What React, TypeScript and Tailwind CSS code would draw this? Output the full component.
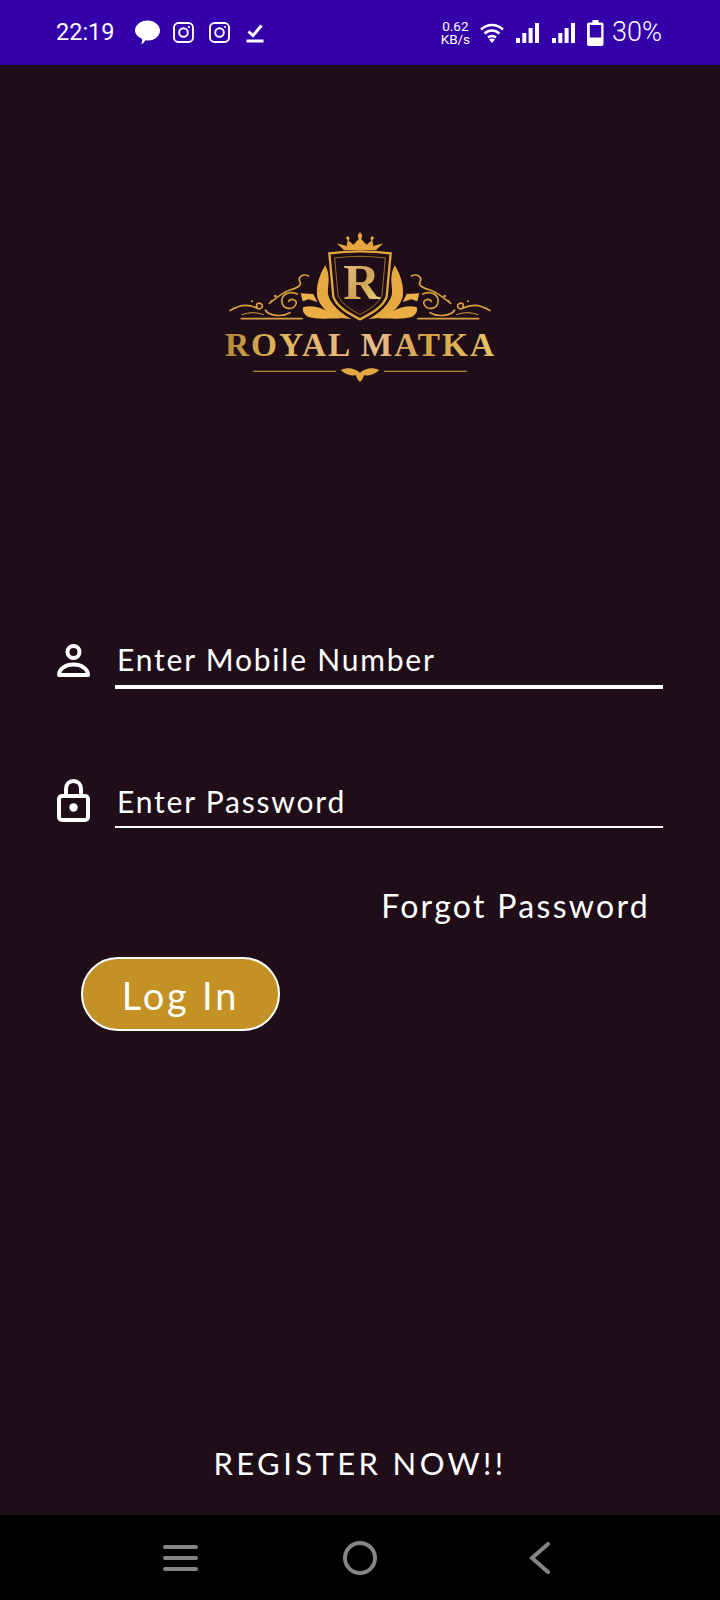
const UI_FONT = { fontFamily: 'Lato, "Noto Sans", sans-serif' }

function StatusIcons() {
  return (
    <div className="flex items-center">
      <svg width="25" height="25" viewBox="0 0 25 25" className="ml-[20px]" fill="#fff">
        <path d="M12.500 0.500C19.400 0.500 25 5 25 10.600c0 5.500-5.200 9.900-11.700 9.900-1.100 0-1.900-.1-2.800-.3-1 1.400-2.700 3.700-4.300 4.100.7-1.600 1.100-3.400.9-5.400C3 17.200 0 14.200 0 10.600 0 5 5.600 0.500 12.500 0.500Z" />
      </svg>
      {[0, 1].map((i) => (
        <svg key={i} width="21" height="21" viewBox="0 0 21 21" className={i === 0 ? 'ml-[13px]' : 'ml-[15px]'} fill="none" stroke="#fff" strokeWidth="1.900">
          <rect x="1" y="1" width="19" height="19" rx="4.500" />
          <circle cx="10.500" cy="10.500" r="4.300" />
          <circle cx="16" cy="5" r="1.100" fill="#fff" stroke="none" />
        </svg>
      ))}
      <svg width="18" height="20" viewBox="0 0 18 20" className="ml-[16px]" fill="none" stroke="#fff" strokeWidth="3">
        <path d="M2.500 8.500 7 12.500 15.500 2.500" />
        <path d="M0.500 18h17" />
      </svg>
    </div>
  )
}

function SignalBars({ className }: { className: string }) {
  return (
    <svg width="23" height="20" viewBox="0 0 23 20" className={className} fill="#fff">
      <rect x="0" y="15" width="4" height="5" />
      <rect x="6.300" y="10" width="4" height="10" />
      <rect x="12.600" y="5" width="4" height="15" />
      <rect x="19" y="0" width="4" height="20" />
    </svg>
  )
}

function NetworkIcons() {
  return (
    <div className="flex items-center">
      <div className="flex flex-col items-center gap-[1px] text-[13.500px] leading-[12px] font-[Roboto]">
        <span>0.62</span>
        <span>KB/s</span>
      </div>
      <svg width="24" height="20" viewBox="0 0 24 20" className="ml-[10px]" fill="none" stroke="#fff" strokeWidth="2.400">
        <path d="M1 6.500C7.500 0.500 16.500 0.500 23 6.500" />
        <path d="M4.500 10.500C9 6.500 15 6.500 19.500 10.500" />
        <path d="M8 14.500C10.500 12.500 13.500 12.500 16 14.500" />
        <path d="M12 20l-3-3.500c2-1.300 4-1.300 6 0Z" fill="#fff" stroke="none" />
      </svg>
      <SignalBars className="ml-[12px]" />
      <SignalBars className="ml-[13px]" />
      <svg width="17" height="26" viewBox="0 0 17 26" className="ml-[12px]" fill="#fff">
        <path d="M5.500 0h6v2.500h3a2 2 0 0 1 2 2V24a2 2 0 0 1-2 2h-12.500a2 2 0 0 1-2-2V4.500a2 2 0 0 1 2-2h3.500Z" />
        <rect x="2.800" y="5" width="11.400" height="12.500" fill="#3300aa" />
      </svg>
      <span className="ml-[8px] text-[27px] leading-none font-[Roboto] font-light">30%</span>
    </div>
  )
}

// one side of the logo's ornament, the other side is this one mirrored
function Flourish() {
  return (
    <g>
      <path d="M346 136C364 170 352 200 354 222 360 252 392 280 424 297 372 297 335 272 322 232 316 200 330 160 346 136Z" fill="#e6a83f" />
      <path d="M272 220 310 222 322 246 296 238 278 244Z" fill="#eab04a" />
      <path d="M280 262C310 252 342 266 396 295 340 297 306 297 290 288 280 280 276 270 280 262Z" fill="#eaae45" />
      <g stroke="#d99f3e" strokeWidth="5" strokeLinecap="round">
        <path d="M296 168C280 160 262 170 270 186 276 196 262 204 240 210 216 218 196 236 178 250" />
        <path d="M262 222C236 210 212 226 216 248 220 268 250 272 258 252 262 240 244 232 236 244" />
        <path d="M166 270C176 288 216 292 240 278" />
        <path d="M60 272C84 256 112 250 140 264 156 272 164 254 150 250 142 248 136 256 142 262" />
        <path d="M96 284C120 276 138 276 160 284" strokeWidth="3" />
        <path d="M94 296H276" />
      </g>
      <circle cx="196" cy="228" r="4" fill="#e0a640" />
      <circle cx="184" cy="244" r="3" fill="#e0a640" />
      <circle cx="126" cy="244" r="3" fill="#e0a640" />
    </g>
  )
}

function LogoMark() {
  return (
    <svg width="300" height="170" viewBox="0 0 900 510" fill="none">
      <defs>
        <linearGradient id="gold" x1="0" y1="0" x2="1" y2="0">
          <stop offset="0" stopColor="#b98a37" />
          <stop offset="0.2" stopColor="#e2b55a" />
          <stop offset="0.55" stopColor="#ebbd8e" />
          <stop offset="0.75" stopColor="#d4a344" />
          <stop offset="1" stopColor="#e9c568" />
        </linearGradient>
        <linearGradient id="letter" x1="0" y1="0" x2="1" y2="1">
          <stop offset="0" stopColor="#e9c48e" />
          <stop offset="0.5" stopColor="#cfa256" />
          <stop offset="1" stopColor="#f5de80" />
        </linearGradient>
      </defs>

      {/* crown */}
      <path d="M380 70 410 78 413 60 407 54 413 48 419 54 416 62 430 74 446 58 443 46 450 36 457 46 454 58 470 74 484 62 481 54 487 48 493 54 487 60 490 78 520 70 498 90H402Z" fill="#e3a53c" />
      {/* shield */}
      <path d="M358 100Q450 88 542 100L530 230C520 262 480 282 450 298 420 282 380 262 370 230Z" stroke="#e5a63d" strokeWidth="7" fill="#1f0e18" />
      <path d="M374 114Q450 104 526 114L516 226C506 252 475 270 450 284 425 270 394 252 384 226Z" stroke="#b97f2a" strokeWidth="2.500" />
      <text x="455" y="238" textAnchor="middle" fontFamily="Liberation Serif, serif" fontWeight="700" fontSize="152" fill="url(#letter)">R</text>

      <Flourish />
      <g transform="translate(900 0) scale(-1 1)">
        <Flourish />
      </g>

      <text x="45" y="408" fontFamily="Liberation Serif, serif" fontWeight="700" fontSize="100" textLength="807" lengthAdjust="spacing" fill="url(#gold)">ROYAL MATKA</text>

      {/* bottom ornament */}
      <path d="M130 454H378M522 454H770" stroke="#b8893a" strokeWidth="3.500" />
      <path d="M392 450C415 440 435 446 450 458 465 446 485 440 508 450 494 464 474 468 462 466 460 476 455 482 450 486 445 482 440 476 438 466 426 468 406 464 392 450Z" fill="#e2a740" />
    </svg>
  )
}

function Field({ label, line, icon }: { label: string; line: string; icon: React.ReactNode }) {
  return (
    <div className="flex items-end">
      <div className="w-[33px] shrink-0">{icon}</div>
      <div className={`ml-[25px] flex-1 border-white pl-[2px] ${line}`}>
        <span className="block text-[30px] leading-[44px] tracking-[1.800px] text-white">{label}</span>
      </div>
    </div>
  )
}

const UserIcon = (
  <svg width="33" height="33" viewBox="0 0 33 33" fill="none" stroke="#fff" strokeWidth="4" className="mb-[12px]">
    <circle cx="16.500" cy="8" r="6" />
    <path d="M2 31C2 24.500 9 20.500 16.500 20.500S31 24.500 31 31Z" strokeLinejoin="round" />
  </svg>
)

const LockIcon = (
  <svg width="33" height="43" viewBox="0 0 33 43" fill="none" stroke="#fff" strokeWidth="4" className="mb-[6px]">
    <rect x="2" y="17" width="29" height="24" rx="3" />
    <path d="M9 17V10C9 5 12.300 2 16.500 2S24 5 24 10V17" />
    <circle cx="16.500" cy="28.500" r="4.200" fill="#fff" stroke="none" />
  </svg>
)

export default function App() {
  return (
    <div className="flex h-[1600px] w-[720px] flex-col bg-[#1f0e18] text-white" style={UI_FONT}>
      <header className="flex h-[65px] shrink-0 items-center justify-between bg-[#3300aa] pl-[56px] pr-[58px]">
        <div className="flex items-center">
          <span className="text-[23.500px] leading-none font-[Roboto]">22:19</span>
          <StatusIcons />
        </div>
        <NetworkIcons />
      </header>

      <main className="flex flex-1 flex-col">
        <div className="mt-[155px] flex justify-center">
          <LogoMark />
        </div>

        <div className="mt-[247px] flex flex-col gap-[90px] pl-[57px] pr-[57px]">
          <Field label="Enter Mobile Number" line="border-b-[4px] pb-[4px]" icon={UserIcon} />
          <Field label="Enter Password" line="border-b-2 pb-[3px]" icon={LockIcon} />
        </div>

        <div className="mt-[55px] flex justify-end pr-[70px]">
          <span className="text-[32px] leading-[46px] tracking-[2.300px]">Forgot Password</span>
        </div>

        <div className="mt-[28px] pl-[81px]">
          <button className="flex h-[74px] w-[199px] items-center justify-center rounded-full border-2 border-white bg-[#c39124] pt-[3px] text-[38px] tracking-[2.800px] text-white">
            Log In
          </button>
        </div>

        <div className="mt-auto mb-[30px] text-center text-[31px] leading-[44px] tracking-[3.400px]">REGISTER NOW!!</div>
      </main>

      <nav className="flex h-[85px] shrink-0 items-center bg-black pl-[163px]">
        <div className="flex w-[35px] flex-col gap-[7px]">
          <div className="h-[4px] rounded-full bg-[#858585]" />
          <div className="h-[4px] rounded-full bg-[#858585]" />
          <div className="h-[4px] rounded-full bg-[#858585]" />
        </div>
        <div className="ml-[145px] h-[34px] w-[34px] rounded-full border-[4px] border-[#858585]" />
        <svg width="21" height="32" viewBox="0 0 21 32" className="ml-[152px]" fill="none" stroke="#858585" strokeWidth="4" strokeLinecap="round">
          <path d="M19 2 3 16 19 30" />
        </svg>
      </nav>
    </div>
  )
}
